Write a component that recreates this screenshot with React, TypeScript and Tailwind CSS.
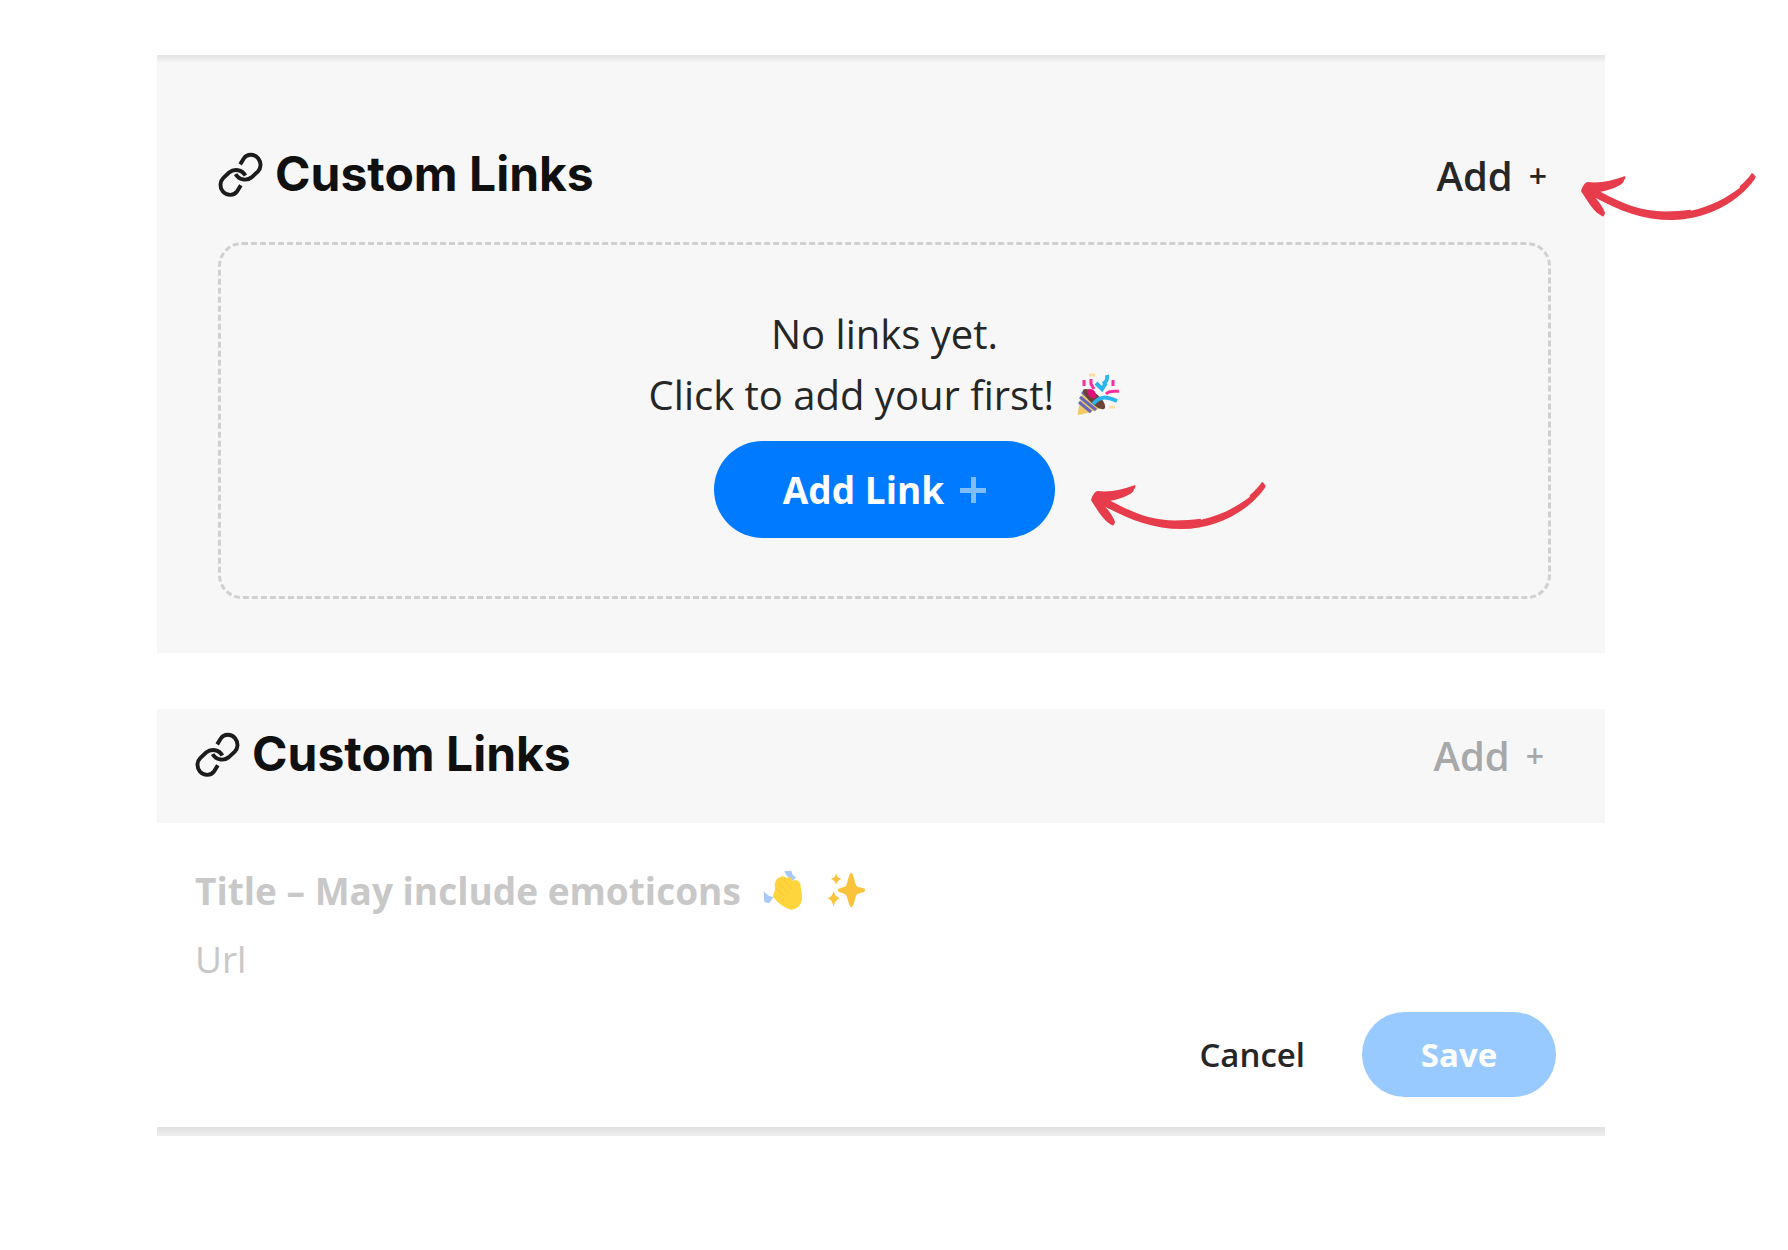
type IconProps = { className?: string };

function LinkIcon({ className }: IconProps) {
  return (
    <svg
      viewBox="24 34 138 138"
      className={className}
      fill="none"
      stroke="#1c1c1c"
      strokeWidth="12"
      aria-hidden="true"
    >
      <path d="M92 72L103 54C113 39 135 39 147 53C158 67 156 84 146 94L128 111C112 124 88 120 78 102" />
      <path d="M94 136L83 154C73 169 51 169 39 155C28 141 30 124 40 114L58 97C74 84 98 88 108 106" />
    </svg>
  );
}

function Arrow({ className }: IconProps) {
  return (
    <svg viewBox="90 125 530 147" className={className} fill="#e63c4b" aria-hidden="true">
      <path d="M93 183C96 170 103 158 112 155C150 160 185 151 223 138C228 138 226 145 222 150C219 161 210 165 200 169C184 176 168 181 151 184C220 221 275 243 345 243C372 243 396 241 420 238L423 241C480 229 530 202 568 173L569 167C583 155 595 143 604 129C608 127 611 134 616 138C616 145 610 151 604 159C550 225 460 268 365 269C280 269 205 240 136 202C148 216 159 231 165 247C163 253 162 258 158 258C132 247 115 216 93 183Z" />
    </svg>
  );
}

function PlusIcon({ className }: IconProps) {
  return (
    <svg viewBox="0 0 26 26" className={className} fill="currentColor" aria-hidden="true">
      <path d="M11 0h5v11h10v5H16v10h-5V16H0v-5h11z" />
    </svg>
  );
}

function PartyIcon({ className }: IconProps) {
  return (
    <svg viewBox="0 0 44 44" className={className} aria-hidden="true">
      <path d="M8 16L28 32C26 37 8 41 2 42C1 40 5 24 8 16Z" fill="#f3c968" />
      <path d="M3 29l12 10M4 24l16 13M6 19l19 15" stroke="#6668b8" strokeWidth="3" />
      <path d="M7 17C12 12 31 27 29 35C25 41 6 23 7 17Z" fill="#6b4338" />
      <path d="M11 17c5-3 10 1 9 8c-4 2-9-3-9-8z" fill="#e0107c" />
      <path
        d="M8 7v6M15 6v5l3 5M37 7v6M30 21c4-4 8-2 13-3"
        stroke="#fb2c9d"
        strokeWidth="3"
        fill="none"
      />
      <path
        d="M31 2c1 5-1 7-4 9M20 10l6 6 4-6M17 31c8-9 14-7 24-3"
        stroke="#2bb5ee"
        strokeWidth="4"
        fill="none"
      />
      <path d="M13 2h6M33 34h6" stroke="#ffdca0" strokeWidth="3" />
    </svg>
  );
}

function WaveIcon({ className }: IconProps) {
  return (
    <svg viewBox="520 20 120 120" className={className} aria-hidden="true">
      <path
        d="M583 24L605 22L610 36L620 42L608 52L592 38ZM522 84L538 98L552 102L538 120L524 116Z"
        fill="#a9c9fd"
      />
      <path
        d="M556 72C552 62 560 44 570 42C578 36 586 40 592 44C600 38 606 44 608 52C618 48 628 50 632 62C634 78 638 94 637 108C634 126 622 138 606 139C588 138 566 120 551 102C548 94 558 84 556 72Z"
        fill="#ffd53e"
      />
      <path d="M566 58l30 30M582 50l26 28M560 76l24 22" stroke="#fbc52f" strokeWidth="3" />
    </svg>
  );
}

function SparklesIcon({ className }: IconProps) {
  return (
    <svg viewBox="712 26 118 110" className={className} fill="#fbc23b" aria-hidden="true">
      <path d="M786 28C796 34 796 66 804 70C812 74 828 74 829 81C828 89 812 90 804 94C796 100 798 128 786 134C776 128 776 100 768 94C760 90 746 89 745 81C746 74 760 74 768 70C776 64 776 34 786 28Z" />
      <path d="M740 30C744 42 746 44 756 47C746 51 744 53 740 65C736 53 734 51 724 47C734 44 736 42 740 30Z" />
      <path d="M732 84C736 98 740 102 752 106C740 111 736 116 732 132C728 116 726 111 713 106C726 102 728 98 732 84Z" />
    </svg>
  );
}

function Title() {
  return (
    <h2 className="flex items-center gap-3 font-['Inter',sans-serif] text-5xl leading-[60px] font-bold text-[#101010]">
      <LinkIcon className="size-[45px]" />
      Custom Links
    </h2>
  );
}

export default function App() {
  return (
    <main className="flex flex-col gap-14 bg-white pt-[55px] pr-[183px] pl-[157px] font-['Open_Sans',sans-serif] text-[#262626]">
      {/* Empty state */}
      <section className="bg-[#f7f7f7] pb-[54px]">
        <div className="h-2 bg-linear-to-b from-[#e2e2e2] to-[#f7f7f7]" />
        <div className="pt-[79px] pr-[54px] pl-[61px]">
          <div className="mb-9 flex items-center justify-between pr-1">
            <Title />
            <div className="relative mt-1">
              <button
                type="button"
                className="flex items-center gap-4 text-[40px] leading-[60px] font-semibold"
              >
                Add
                <span className="text-[32px]">+</span>
              </button>
              <Arrow className="absolute top-[26px] left-full ml-[33px] w-[177px]" />
            </div>
          </div>
          <div className="flex flex-col items-center rounded-3xl border-[3px] border-dashed border-[#d0d0d0] pt-[58px] pb-[58px]">
            <p className="text-center text-[40px] leading-[61px]">
              No links yet.
              <br />
              Click to add your first! <PartyIcon className="ml-3 inline size-11 align-[-7px]" />
            </p>
            <div className="relative mt-4">
              <button
                type="button"
                className="flex h-[97px] w-[341px] items-center justify-center gap-4 rounded-full bg-[#007bff] text-[37px] font-bold text-white"
              >
                Add Link
                <PlusIcon className="size-[26px] text-[#80bdff]" />
              </button>
              <Arrow className="absolute top-10 left-full ml-[35px] w-[177px]" />
            </div>
          </div>
        </div>
      </section>

      {/* New link form */}
      <section>
        <div className="flex items-center justify-between bg-[#f7f7f7] pt-[13px] pr-[61px] pb-[37px] pl-[38px]">
          <Title />
          <button
            type="button"
            disabled
            className="mt-1 flex items-center gap-4 text-[40px] leading-[60px] font-semibold text-[#a6a8aa]"
          >
            Add
            <span className="text-[32px]">+</span>
          </button>
        </div>
        <form className="pt-[33px] pr-[49px] pl-[38px]">
          <div className="flex items-center">
            <input
              aria-label="Title"
              placeholder="Title – May include emoticons"
              className="field-sizing-content h-[68px] text-[37px] font-bold outline-none placeholder:text-[#c8c8c8]"
            />
            <WaveIcon className="ml-[22px] size-10" />
            <SparklesIcon className="ml-6 h-9" />
          </div>
          <input
            aria-label="Url"
            placeholder="Url"
            className="block h-[68px] w-full text-[37px] outline-none placeholder:text-[#c8c8c8]"
          />
          <div className="mt-5 flex items-center justify-end gap-[57px]">
            <button type="button" className="text-[33px] font-semibold">
              Cancel
            </button>
            <button
              type="submit"
              disabled
              className="h-[85px] w-[194px] rounded-full bg-[#99caff] text-[33px] font-bold text-white"
            >
              Save
            </button>
          </div>
        </form>
        <div className="mt-[30px] h-[9px] bg-linear-to-b from-[#e0e0e0] to-[#efefef]" />
      </section>
    </main>
  );
}
